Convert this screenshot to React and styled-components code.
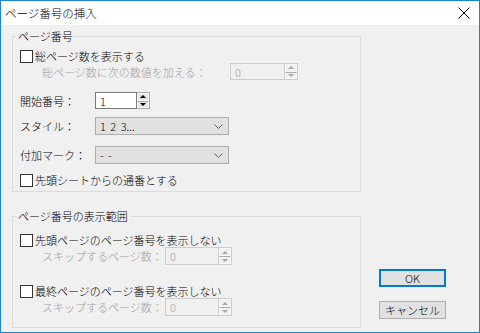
import React from "react";
import styled, { createGlobalStyle } from "styled-components";

const Global = createGlobalStyle`
  html, body { margin: 0; padding: 0; background: #fff; }
  body { font-family: "Noto Sans CJK JP", "Noto Sans", sans-serif; font-size: 11px; font-weight: 300; color: #000; }
  * { box-sizing: border-box; }
`;

const Window = styled.div`
  width: 480px;
  height: 333px;
  border: 1px solid #1883d7;
  background: #f0f0f0;
  display: flex;
  flex-direction: column;
  overflow: hidden;
`;

const TitleBar = styled.div`
  height: 24px;
  background: #fff;
  display: flex;
  align-items: center;
  justify-content: space-between;
  padding: 0 8px 0 4px;
  font-size: 11.5px;
  flex-shrink: 0;
`;

const Close = styled.div`
  width: 14px;
  height: 14px;
  display: flex;
  align-items: center;
  justify-content: center;
`;

const Body = styled.div`
  flex: 1;
  display: flex;
  padding: 4px 0 3px 11px;
`;

const LeftCol = styled.div`
  width: 349px;
  display: flex;
  flex-direction: column;
`;

const Group = styled.fieldset`
  margin: 0;
  margin-top: ${(p) => p.$mt || 0}px;
  border: 1px solid #dcdcdc;
  padding: 0 0 ${(p) => p.$pb || 0}px 7px;
  min-width: 0;
`;

const Legend = styled.legend`
  padding: 0 2px;
  margin-left: -4px;
  line-height: 14px;
  height: 14px;
`;

const Row = styled.div`
  display: flex;
  align-items: center;
  height: ${(p) => p.$h || 14}px;
  margin-top: ${(p) => p.$mt || 0}px;
  padding-left: ${(p) => p.$indent || 0}px;
  white-space: nowrap;
`;

const Box = styled.span`
  width: 13px;
  height: 13px;
  border: 1px solid #333;
  background: #fff;
  margin-right: 2px;
  flex-shrink: 0;
`;

const Label = styled.span`
  color: ${(p) => (p.$disabled ? "#a0a0a0" : "#000")};
  width: ${(p) => (p.$w ? p.$w + "px" : "auto")};
  flex-shrink: 0;
  line-height: 14px;
`;

const SpinWrap = styled.div`
  display: flex;
  height: ${(p) => p.$h || 17}px;
`;

const Field = styled.div`
  width: ${(p) => p.$w}px;
  height: 100%;
  border: 1px solid ${(p) => (p.$disabled ? "#cccccc" : "#7a7a7a")};
  background: ${(p) => (p.$disabled ? "#f0f0f0" : "#fff")};
  color: ${(p) => (p.$disabled ? "#a0a0a0" : "#000")};
  display: flex;
  align-items: center;
  padding-left: 4px;
  line-height: 14px;
`;

const Spin = styled.div`
  width: 13px;
  height: 100%;
  display: flex;
  flex-direction: column;
  border: 1px solid ${(p) => (p.$disabled ? "#cccccc" : "#adadad")};
  border-left: none;
`;

const SpinHalf = styled.div`
  flex: 1;
  display: flex;
  align-items: center;
  justify-content: center;
  background: ${(p) => (p.$disabled ? "#f0f0f0" : "#e5e5e5")};
  border: 1px solid ${(p) => (p.$disabled ? "#f7f7f7" : "#fcfcfc")};
  & + & { border-top: 1px solid ${(p) => (p.$disabled ? "#d6d6d6" : "#adadad")}; }
`;

const Select = styled.div`
  width: 134px;
  height: 18px;
  border: 1px solid #adadad;
  background: #e1e1e1;
  display: flex;
  align-items: center;
  justify-content: space-between;
  padding: 0 5px 0 4px;
  line-height: 14px;
  word-spacing: 2px;
`;

const RightCol = styled.div`
  flex: 1;
  display: flex;
  flex-direction: column;
  justify-content: flex-end;
  align-items: flex-start;
  padding: 0 0 10px 18px;
  gap: 14px;
`;

const Button = styled.div`
  width: 67px;
  height: 18px;
  background: #e1e1e1;
  border: ${(p) => (p.$default ? "2px solid #0078d7" : "1px solid #adadad")};
  display: flex;
  align-items: center;
  justify-content: center;
  line-height: 14px;
`;

const Arrow = ({ up, disabled }) => (
  <svg width="6" height="3" viewBox="0 0 6 3">
    <path
      d={up ? "M0 3 L3 0 L6 3 Z" : "M0 0 L3 3 L6 0 Z"}
      fill={disabled ? "#a8a8a8" : "#000"}
    />
  </svg>
);

const Spinner = ({ value, w, disabled, h }) => (
  <SpinWrap $h={h}>
    <Field $w={w} $disabled={disabled}>{value}</Field>
    <Spin $disabled={disabled}>
      <SpinHalf $disabled={disabled}><Arrow up disabled={disabled} /></SpinHalf>
      <SpinHalf $disabled={disabled}><Arrow disabled={disabled} /></SpinHalf>
    </Spin>
  </SpinWrap>
);

const Chevron = () => (
  <svg width="9" height="5" viewBox="0 0 9 5">
    <path d="M0.5 0.5 L4.5 4.5 L8.5 0.5" fill="none" stroke="#606060" strokeWidth="1" />
  </svg>
);

const Check = ({ children }) => (
  <>
    <Box />
    <Label>{children}</Label>
  </>
);

export default function App() {
  return (
    <>
      <Global />
      <Window>
        <TitleBar>
          <span>ページ番号の挿入</span>
          <Close>
            <svg width="12" height="12" viewBox="0 0 12 12">
              <path d="M0.5 0.5 L11.5 11.5 M11.5 0.5 L0.5 11.5" stroke="#000" strokeWidth="1" />
            </svg>
          </Close>
        </TitleBar>
        <Body>
          <LeftCol>
            <Group $pb={4}>
              <Legend>ページ番号</Legend>
              <Row $mt={6}><Check>総ページ数を表示する</Check></Row>
              <Row $h={17} $indent={22}>
                <Label $disabled $w={188}>総ページ数に次の数値を加える：</Label>
                <Spinner value="0" w={55} disabled />
              </Row>
              <Row $h={17} $mt={12}>
                <Label $w={75}>開始番号：</Label>
                <Spinner value="1" w={42} />
              </Row>
              <Row $h={18} $mt={8}>
                <Label $w={75}>スタイル：</Label>
                <Select><span>1 2 3...</span><Chevron /></Select>
              </Row>
              <Row $h={18} $mt={11}>
                <Label $w={75}>付加マーク：</Label>
                <Select><span>- -</span><Chevron /></Select>
              </Row>
              <Row $mt={9}><Check>先頭シートからの通番とする</Check></Row>
            </Group>
            <Group $mt={17} $pb={11}>
              <Legend>ページ番号の表示範囲</Legend>
              <Row $mt={10}><Check>先頭ページのページ番号を表示しない</Check></Row>
              <Row $h={18} $indent={22}>
                <Label $disabled $w={123}>スキップするページ数：</Label>
                <Spinner value="0" w={54} disabled h={18} />
              </Row>
              <Row $mt={19}><Check>最終ページのページ番号を表示しない</Check></Row>
              <Row $h={18} $indent={22}>
                <Label $disabled $w={123}>スキップするページ数：</Label>
                <Spinner value="0" w={54} disabled h={18} />
              </Row>
            </Group>
          </LeftCol>
          <RightCol>
            <Button $default>OK</Button>
            <Button>キャンセル</Button>
          </RightCol>
        </Body>
      </Window>
    </>
  );
}
